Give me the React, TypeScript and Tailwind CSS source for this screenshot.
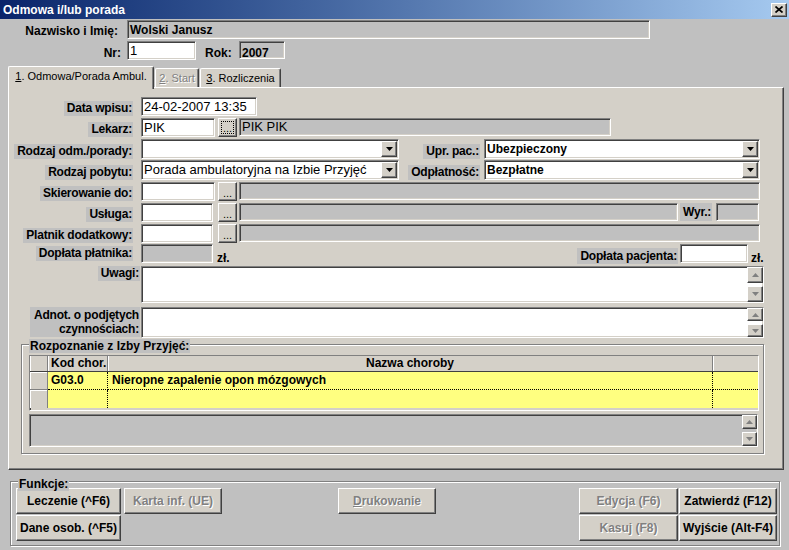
import React from "react";

const sunken =
  "border border-t-[#808080] border-l-[#808080] border-b-white border-r-white shadow-[inset_1px_1px_0_#404040,inset_-1px_-1px_0_#d4d0c8]";
const raised =
  "border border-t-white border-l-white border-b-[#404040] border-r-[#404040] shadow-[inset_-1px_-1px_0_#808080]";
const etched = "border border-[#808080] shadow-[inset_1px_1px_0_#fff,1px_1px_0_#fff]";

type P = { className?: string; children?: React.ReactNode };

function Box({ className = "", children }: P) {
  return (
    <div className={`${sunken} flex items-center overflow-hidden whitespace-nowrap pl-[2px] shrink-0 ${className}`}>
      {children}
    </div>
  );
}

function Label({ className = "", children }: P) {
  return (
    <span
      className={`bg-[#c0c0c0] pl-[3px] pr-[1px] h-[15px] leading-[15px] font-bold text-[12px] tracking-[-0.2px] whitespace-nowrap ${className}`}
    >
      {children}
    </span>
  );
}

function LabelCol({ className = "pr-[8px] items-end", children }: P) {
  return <div className={`w-[132px] shrink-0 flex justify-end ${className}`}>{children}</div>;
}

function Arrow({ up, color = "#000" }: { up?: boolean; color?: string }) {
  return (
    <svg width="7" height="4" viewBox="0 0 7 4">
      <path d={up ? "M3.5 0L7 4H0z" : "M0 0h7L3.5 4z"} fill={color} />
    </svg>
  );
}

function Select({ className = "", children }: P) {
  return (
    <Box className={`bg-white justify-between pr-[1px] ${className}`}>
      <span>{children}</span>
      <div className={`${raised} bg-[#d4d0c8] w-[16px] h-[16px] shrink-0 flex items-center justify-center`}>
        <Arrow />
      </div>
    </Box>
  );
}

function Dots({ className = "", focus }: { className?: string; focus?: boolean }) {
  return (
    <div className={`${raised} bg-[#d4d0c8] w-[19px] h-[19px] shrink-0 flex items-center justify-center ${className}`}>
      <span
        className={`w-[13px] h-[13px] flex items-end justify-center text-[11px] leading-[8px] pb-[1px] ${
          focus ? "border border-dotted border-black" : ""
        }`}
      >
        ...
      </span>
    </div>
  );
}

function ScrollBtn({ up, className = "" }: { up?: boolean; className?: string }) {
  return (
    <div className={`${raised} bg-[#d4d0c8] flex items-center justify-center ${className}`}>
      <Arrow up={up} color="#808080" />
    </div>
  );
}

function Btn({ className = "", disabled, children }: P & { disabled?: boolean }) {
  return (
    <div
      className={`${raised} bg-[#d4d0c8] shrink-0 flex items-center justify-center font-bold text-[12px] whitespace-nowrap ${
        disabled ? "text-[#808080] [text-shadow:1px_1px_0_#fff]" : ""
      } ${className}`}
    >
      {children}
    </div>
  );
}

function GridRow({ code, name, last }: { code: string; name: string; last?: boolean }) {
  const b = last ? "" : "border-b";
  return (
    <div className="flex h-[18px] shrink-0">
      <div className={`w-[18px] bg-[#d4d0c8] border-r ${b} border-[#808080] shadow-[inset_1px_1px_0_#fff]`} />
      <div className={`w-[60px] bg-[#ffff80] border-r ${b} border-dotted border-black pl-[3px] font-bold leading-[17px]`}>
        {code}
      </div>
      <div className={`w-[605px] bg-[#ffff80] border-r ${b} border-dotted border-black pl-[4px] font-bold leading-[17px]`}>
        {name}
      </div>
      <div className={`flex-1 bg-[#ffff80] ${b} border-dotted border-black`} />
    </div>
  );
}

const tab =
  "bg-[#d4d0c8] border-t border-l border-white border-r border-r-[#404040] shadow-[inset_-1px_0_0_#808080] rounded-t-[2px] flex items-center justify-center text-[11px]";

export default function App() {
  return (
    <div className="w-[789px] h-[550px] overflow-hidden bg-[#c0c0c0] text-black font-['Liberation_Sans',Arial,sans-serif] text-[12px] flex flex-col">
      {/* title bar */}
      <div className="h-[19px] shrink-0 flex items-center justify-between bg-linear-to-r from-[#0a246a] to-[#a6caf0] pl-[3px] pr-[2px]">
        <span className="text-white font-bold text-[12px]">Odmowa i/lub porada</span>
        <div className={`${raised} bg-[#d4d0c8] w-[16px] h-[14px] flex items-center justify-center`}>
          <svg width="8" height="7" viewBox="0 0 8 7">
            <path d="M0.5 0.5l7 6M7.5 0.5l-7 6" stroke="#000" strokeWidth="1.7" />
          </svg>
        </div>
      </div>

      {/* header */}
      <div className="flex h-[19px] mt-[1px] shrink-0">
        <div className="w-[118px] flex items-center justify-end pt-[3px] font-bold">Nazwisko i Imię:</div>
        <Box className="ml-[9px] w-[523px] bg-[#c0c0c0] font-bold">Wolski Janusz</Box>
      </div>
      <div className="flex h-[19px] mt-[2px] shrink-0">
        <div className="w-[121px] flex items-center justify-end pt-[4px] font-bold">Nr:</div>
        <Box className="ml-[6px] w-[69px] bg-white text-[13px]">1</Box>
        <div className="ml-[9px] w-[34px] flex items-center pt-[4px] font-bold">Rok:</div>
        <Box className="w-[46px] h-[18px] bg-[#c0c0c0] font-bold items-start pt-[2px]">2007</Box>
      </div>

      {/* tabs */}
      <div className="flex items-end h-[21px] mt-[6px] pl-[8px] shrink-0 relative z-10">
        <div className={`${tab} h-[23px] -mb-[2px] w-[146px] pb-[3px]`}>
          <span>
            <u>1</u>. Odmowa/Porada Ambul.
          </span>
        </div>
        <div className={`${tab} ml-[1px] h-[19px] w-[44px] text-[#808080] [text-shadow:1px_1px_0_#fff]`}>
          <span>
            <u>2</u>. Start
          </span>
        </div>
        <div className={`${tab} ml-[1px] h-[19px] w-[81px]`}>
          <span>
            <u>3</u>. Rozliczenia
          </span>
        </div>
      </div>

      {/* tab page */}
      <div className="ml-[8px] w-[776px] h-[383px] shrink-0 bg-[#d4d0c8] border border-t-white border-l-white border-r-[#404040] border-b-[#404040] shadow-[inset_-1px_-1px_0_#808080] flex flex-col">
        <div className="flex h-[19px] mt-[9px]">
          <LabelCol>
            <Label>Data wpisu:</Label>
          </LabelCol>
          <Box className="w-[116px] bg-white text-[13px]">24-02-2007 13:35</Box>
        </div>

        <div className="flex h-[19px] mt-[2px]">
          <LabelCol>
            <Label>Lekarz:</Label>
          </LabelCol>
          <Box className="w-[74px] bg-white text-[13px]">PIK</Box>
          <Dots focus className="ml-[3px]" />
          <Box className="ml-[2px] w-[372px] h-[18px] bg-[#c0c0c0] text-[13px]">PIK PIK</Box>
        </div>

        <div className="flex h-[20px] mt-[2px]">
          <LabelCol>
            <Label>Rodzaj odm./porady:</Label>
          </LabelCol>
          <Select className="w-[258px]" />
          <div className="w-[85px] shrink-0 flex justify-end items-end pr-[4px]">
            <Label>Upr. pac.:</Label>
          </div>
          <Select className="w-[276px] font-bold">Ubezpieczony</Select>
        </div>

        <div className="flex h-[20px] mt-[1px]">
          <LabelCol>
            <Label>Rodzaj pobytu:</Label>
          </LabelCol>
          <Select className="w-[258px] text-[13px]">Porada ambulatoryjna na Izbie Przyjęć</Select>
          <div className="w-[85px] shrink-0 flex justify-end items-end pr-[4px]">
            <Label>Odpłatność:</Label>
          </div>
          <Select className="w-[276px] font-bold">Bezpłatne</Select>
        </div>

        <div className="flex h-[19px] mt-[2px]">
          <LabelCol>
            <Label>Skierowanie do:</Label>
          </LabelCol>
          <Box className="w-[74px] bg-white" />
          <Dots className="ml-[3px]" />
          <Box className="ml-[2px] w-[521px] h-[18px] bg-[#c0c0c0]" />
        </div>

        <div className="flex h-[19px] mt-[2px]">
          <LabelCol>
            <Label>Usługa:</Label>
          </LabelCol>
          <Box className="w-[72px] bg-white" />
          <Dots className="ml-[5px]" />
          <Box className="ml-[2px] w-[439px] h-[18px] bg-[#c0c0c0]" />
          <div className="w-[38px] shrink-0 flex items-start pl-[2px]">
            <Label className="h-[18px] leading-[18px]">Wyr.:</Label>
          </div>
          <Box className="w-[43px] h-[18px] bg-[#c0c0c0]" />
        </div>

        <div className="flex h-[19px] mt-[2px]">
          <LabelCol>
            <Label>Platnik dodatkowy:</Label>
          </LabelCol>
          <Box className="w-[72px] bg-white" />
          <Dots className="ml-[5px]" />
          <Box className="ml-[2px] w-[521px] h-[18px] bg-[#c0c0c0]" />
        </div>

        <div className="flex h-[22px] mt-[1px]">
          <LabelCol className="pr-[8px] items-start pt-[2px]">
            <Label>Dopłata płatnika:</Label>
          </LabelCol>
          <Box className="w-[72px] h-[19px] bg-[#c0c0c0]" />
          <div className="w-[24px] shrink-0 flex items-end pl-[4px] pb-[2px] font-bold leading-[12px]">zł.</div>
          <div className="w-[441px] shrink-0 flex justify-end items-start pt-[4px]">
            <Label className="h-[16px] leading-[16px]">Dopłata pacjenta:</Label>
          </div>
          <Box className="ml-[2px] w-[68px] h-[19px] bg-white" />
          <div className="flex items-end pl-[3px] pb-[2px] font-bold leading-[12px]">zł.</div>
        </div>

        <div className="flex h-[37px]">
          <LabelCol className="pr-[1px] items-start">
            <Label>Uwagi:</Label>
          </LabelCol>
          <Box className="w-[623px] h-[37px] bg-white justify-end items-stretch pr-0">
            <div className="w-[16px] flex flex-col justify-between">
              <ScrollBtn up className="h-[16px]" />
              <ScrollBtn className="h-[16px]" />
            </div>
          </Box>
        </div>

        <div className="flex h-[31px] mt-[4px]">
          <LabelCol className="pr-[1px] items-start">
            <span className="bg-[#c0c0c0] pl-[4px] pr-[1px] pt-[1px] h-[30px] leading-[14px] font-bold tracking-[-0.2px] text-right">
              Adnot. o podjętych
              <br />
              czynnościach:
            </span>
          </LabelCol>
          <Box className="w-[623px] h-[31px] bg-white justify-end items-stretch pr-0">
            <div className="w-[16px] flex flex-col justify-between">
              <ScrollBtn up className="h-[13px]" />
              <ScrollBtn className="h-[13px]" />
            </div>
          </Box>
        </div>

        {/* Rozpoznanie group */}
        <div className={`${etched} relative mt-[6px] ml-[12px] w-[743px] h-[110px] pl-[7px] pt-[10px] flex flex-col`}>
          <span className="absolute left-[7px] -top-[6px] bg-[#c0c0c0] px-[1px] h-[14px] leading-[14px] font-bold">
            Rozpoznanie z Izby Przyjęć:
          </span>
          <div className={`${sunken} w-[730px] h-[56px] flex flex-col overflow-hidden`}>
            <div className="flex h-[16px] shrink-0 bg-[#d4d0c8] border-b border-[#404040]">
              <div className="w-[18px] border-r border-[#808080] shadow-[inset_1px_0_0_#fff]" />
              <div className="w-[60px] border-r border-[#808080] shadow-[inset_1px_0_0_#fff] pl-[3px] font-bold leading-[15px]">
                Kod chor.
              </div>
              <div className="w-[605px] border-r border-[#808080] shadow-[inset_1px_0_0_#fff] text-center font-bold leading-[15px]">
                Nazwa choroby
              </div>
              <div className="flex-1 shadow-[inset_1px_0_0_#fff]" />
            </div>
            <GridRow code="G03.0" name="Nieropne zapalenie opon mózgowych" />
            <GridRow code="" name="" last />
          </div>
          <div className={`${sunken} mt-[3px] w-[729px] h-[33px] bg-[#c0c0c0] flex justify-end`}>
            <div className="w-[15px] flex flex-col justify-between">
              <ScrollBtn up className="h-[14px]" />
              <ScrollBtn className="h-[14px]" />
            </div>
          </div>
        </div>
      </div>

      {/* Funkcje */}
      <div className={`${etched} relative mt-[11px] ml-[10px] w-[770px] h-[65px] shrink-0 pl-[5px] pt-[6px] flex items-start`}>
        <span className="absolute left-[7px] -top-[5px] bg-[#c0c0c0] px-[1px] h-[14px] leading-[14px] font-bold">Funkcje:</span>
        <div className="flex flex-col gap-[1px]">
          <Btn className="w-[105px] h-[26px]">Leczenie (^F6)</Btn>
          <Btn className="w-[105px] h-[26px]">Dane osob. (^F5)</Btn>
        </div>
        <Btn disabled className="ml-[3px] w-[98px] h-[26px]">
          Karta inf. (UE)
        </Btn>
        <Btn disabled className="ml-[116px] w-[98px] h-[26px]">
          <span>
            <u>D</u>rukowanie
          </span>
        </Btn>
        <div className="ml-[143px] grid grid-cols-[99px_98px] gap-x-[1px] gap-y-[1px]">
          <Btn disabled className="h-[26px]">
            Edycja (F6)
          </Btn>
          <Btn className="h-[26px]">Zatwierdź (F12)</Btn>
          <Btn disabled className="h-[26px]">
            Kasuj (F8)
          </Btn>
          <Btn className="h-[26px]">Wyjście (Alt-F4)</Btn>
        </div>
      </div>
    </div>
  );
}
